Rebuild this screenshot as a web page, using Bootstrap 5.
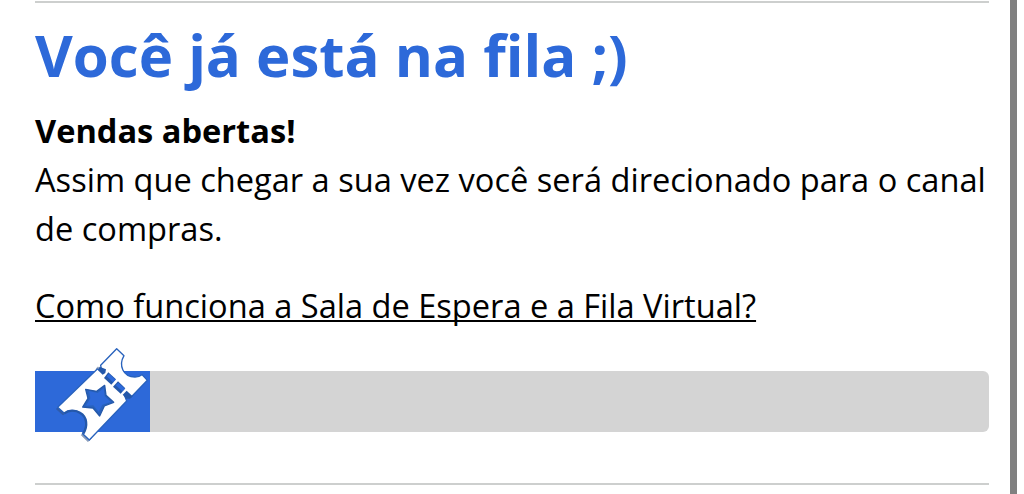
<!DOCTYPE html>
<html lang="pt-BR">
<head>
<meta charset="utf-8">
<meta name="viewport" content="width=device-width, initial-scale=1">
<title>Fila Virtual</title>
<link href="https://cdn.jsdelivr.net/npm/bootstrap@5.3.0/dist/css/bootstrap.min.css" rel="stylesheet">
<style>
  body { font-family: "Open Sans", sans-serif; font-size: 32.6px; line-height: 49px; color: #000; background: #fff; }
  .page { height: 494px; }
  .panel { width: 954px; margin-left: 35px; padding-top: 1px; }
  .rule { height: 2px; background: #cdcfce; }
  .rail { width: 7px; margin-right: 7px; background: #808080; }
  .title { font-size: 58.15px; line-height: 70px; color: #2d69d9; margin: 17px 0 16px; }
  .help { margin-top: 28px; }
  .help a { color: #000; text-decoration-thickness: 2px; text-underline-offset: 2px; text-decoration-skip-ink: none; }
  .queue { height: 61px; margin-top: 41px; margin-bottom: 51px; overflow: visible; background: #d4d4d4; border-radius: 6px; }
  .queue .progress-bar { background: #2d69d9; }
  .ticket { position: absolute; left: -15px; top: -36px; width: 150px; height: 115px; }
</style>
</head>
<body>
<div class="page d-flex justify-content-between overflow-hidden">
  <main class="panel flex-shrink-0">
    <div class="rule"></div>
    <h1 class="title fw-bold text-nowrap">Você já está na fila ;)</h1>
    <p class="mb-0"><strong>Vendas abertas!</strong><br><span class="text-nowrap">Assim que chegar a sua vez você será direcionado para o canal</span><br>de compras.</p>
    <p class="help mb-0 text-nowrap"><a href="#">Como funciona a Sala de Espera e a Fila Virtual?</a></p>
    <div class="queue progress position-relative" role="progressbar" aria-label="Progresso na fila" aria-valuenow="12" aria-valuemin="0" aria-valuemax="100">
      <div class="progress-bar" style="width:12.05%"></div>
      <svg class="ticket" viewBox="0 0 450 345" aria-hidden="true">
        <g transform="translate(-4 5)" fill="#315083" stroke="#315083" stroke-width="2" opacity=".55">
          <path d="M113 217 L124 207 L140 229 L133 235 Z"/>
          <path d="M188 296 L208 315 L218 305 L194 284 Z"/>
          <path d="M237 91 L251 97 L247 108 L232 98 Z"/>
        </g>
        <path d="M113 217 L232 102 L245 108 L242 91 L290 41 L312 62 C295 91 309 126 345 126 Q358 126 366 119 L382 136 L333 187 L314 182 L320 198 L208 315 L188 296 C204 272 201 246 181 234 C164 223 144 226 133 235 Z" fill="#fff" stroke="#2862bd" stroke-width="4" stroke-linejoin="round"/>
        <g fill="#2458aa">
          <path d="M239 95 L258 103 L256 114 L248 119 L234 106 Z"/>
          <path d="M265 112 L288 133 L274 149 L252 129 Z"/>
          <path d="M294 139 L316 160 L302 176 L279 155 Z"/>
          <path d="M320 167 L338 184 L330 191 L319 191 L308 179 Z"/>
        </g>
        <g fill="#2d69d9">
          <path d="M267 116 L287 134 L279 142 L260 124 Z"/>
          <path d="M295 143 L315 161 L307 169 L287 151 Z"/>
        </g>
        <path d="M197 163 L230 169 L254 151 L258 181 L281 202 L253 213 L239 243 L219 219 L188 216 L204 190 Z" fill="#2862bd" stroke="#2458aa" stroke-width="4" stroke-linejoin="round"/>
        <path d="M207 168 L233 174 L251 160 L254 184 L272 201 L247 209 L236 230 L220 211 L198 212 L211 190 Z" fill="#2d69d9"/>
        <path d="M133 235 C145 226 165 223 181 234 C201 246 204 272 190 296" fill="none" stroke="#2458aa" stroke-width="7"/>
      </svg>
    </div>
    <div class="rule"></div>
  </main>
  <div class="rail flex-shrink-0"></div>
</div>
<script src="https://cdn.jsdelivr.net/npm/bootstrap@5.3.0/dist/js/bootstrap.bundle.min.js"></script>
</body>
</html>
